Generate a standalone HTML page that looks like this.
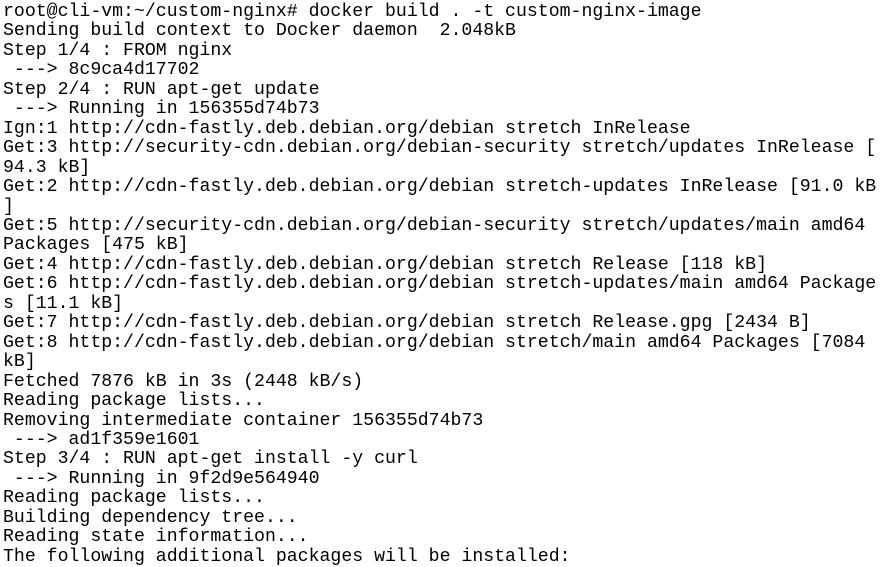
<!DOCTYPE html>
<html><head><style>
html,body{margin:0;padding:0;background:#fff;width:890px;height:567px;overflow:hidden}
pre{margin:0;padding:3px 0 0 3px;font-family:"Liberation Mono","Courier New",monospace;font-size:18.2px;line-height:19.46px;color:#000;white-space:pre}
</style></head><body><pre>root@cli-vm:~/custom-nginx# docker build . -t custom-nginx-image
Sending build context to Docker daemon  2.048kB
Step 1/4 : FROM nginx
 ---&gt; 8c9ca4d17702
Step 2/4 : RUN apt-get update
 ---&gt; Running in 156355d74b73
Ign:1 http://cdn-fastly.deb.debian.org/debian stretch InRelease
Get:3 http://security-cdn.debian.org/debian-security stretch/updates InRelease [
94.3 kB]
Get:2 http://cdn-fastly.deb.debian.org/debian stretch-updates InRelease [91.0 kB
]
Get:5 http://security-cdn.debian.org/debian-security stretch/updates/main amd64
Packages [475 kB]
Get:4 http://cdn-fastly.deb.debian.org/debian stretch Release [118 kB]
Get:6 http://cdn-fastly.deb.debian.org/debian stretch-updates/main amd64 Package
s [11.1 kB]
Get:7 http://cdn-fastly.deb.debian.org/debian stretch Release.gpg [2434 B]
Get:8 http://cdn-fastly.deb.debian.org/debian stretch/main amd64 Packages [7084
kB]
Fetched 7876 kB in 3s (2448 kB/s)
Reading package lists...
Removing intermediate container 156355d74b73
 ---&gt; ad1f359e1601
Step 3/4 : RUN apt-get install -y curl
 ---&gt; Running in 9f2d9e564940
Reading package lists...
Building dependency tree...
Reading state information...
The following additional packages will be installed:
</pre></body></html>
